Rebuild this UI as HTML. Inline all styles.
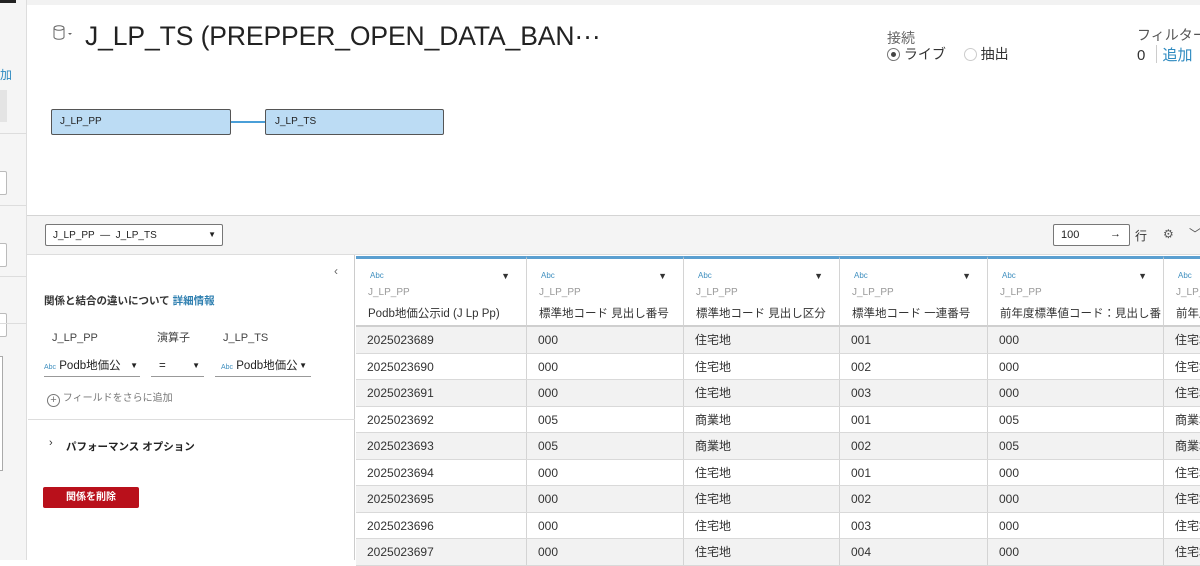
<!DOCTYPE html>
<html><head><meta charset="utf-8"><style>
*{box-sizing:border-box;margin:0;padding:0}
body{width:1200px;height:560px;overflow:hidden;background:#fff;font-family:"Liberation Sans","Noto Sans CJK JP",sans-serif;color:#333;position:relative}
.a{position:absolute}
.hd{border-right:1px solid #d4d4d4;border-bottom:2px solid #cfcfcf;height:71px;top:256px;border-top:3px solid #5b9fd0;background:#fff}
.hd .t{position:absolute;left:14px;top:12px;font-size:8px;color:#3f8fbf}
.hd .s{position:absolute;left:12px;top:28px;font-size:10px;color:#999}
.hd .n{position:absolute;left:12px;top:48px;font-size:11.5px;line-height:14px;color:#333;white-space:nowrap;overflow:hidden;width:calc(100% - 14px)}
.hd .d{position:absolute;right:16px;top:12px;font-size:9px}
.row{position:absolute;left:356px;width:844px;height:26.5px;border-bottom:1px solid #d9d9d9}
.c{position:absolute;top:0;height:100%;border-right:1px solid #d4d4d4;font-size:12px;line-height:14px;padding:6px 0 0 11px;white-space:nowrap;overflow:hidden}
</style></head><body>
<div class="a" style="left:0;top:0;width:27px;height:560px;background:#f5f5f5;border-right:1px solid #ddd"></div>
<div class="a" style="left:0;top:0;width:16px;height:3px;background:#222"></div>
<div class="a" style="left:0;top:66px;font-size:12px;color:#2e8ac0">加</div>
<div class="a" style="left:0;top:90px;width:7px;height:32px;background:#e4e4e4"></div>
<div class="a" style="left:0;top:133px;width:26px;height:1px;background:#ddd"></div>
<div class="a" style="left:-2px;top:171px;width:9px;height:24px;border:1px solid #bbb;background:#fff;border-radius:2px"></div>
<div class="a" style="left:0;top:205px;width:26px;height:1px;background:#ddd"></div>
<div class="a" style="left:-2px;top:243px;width:9px;height:24px;border:1px solid #bbb;background:#fff;border-radius:2px"></div>
<div class="a" style="left:0;top:276px;width:26px;height:1px;background:#ddd"></div>
<div class="a" style="left:-2px;top:313px;width:9px;height:24px;border:1px solid #bbb;background:#fff;border-radius:2px"></div>
<div class="a" style="left:0;top:323px;width:26px;height:1px;background:#ddd"></div>
<div class="a" style="left:-2px;top:356px;width:5px;height:115px;border:1px solid #aaa;background:#fff"></div>
<div class="a" style="left:27px;top:0;width:1173px;height:5px;background:#f2f2f2"></div>
<svg class="a" style="left:52px;top:24px" width="22" height="18" viewBox="0 0 22 18"><ellipse cx="7" cy="4" rx="5" ry="2.3" fill="none" stroke="#666" stroke-width="1"/><path d="M2 4v9c0 1.3 2.2 2.3 5 2.3s5-1 5-2.3V4" fill="none" stroke="#666" stroke-width="1"/><path d="M16 9l2 2 2-2z" fill="#666"/></svg>
<div class="a" style="left:85px;top:21px;font-size:26.5px;color:#222;white-space:nowrap;letter-spacing:-0.1px">J_LP_TS (PREPPER_OPEN_DATA_BAN···</div>
<div class="a" style="left:887px;top:28px;font-size:14px;color:#666">接続</div>
<div class="a" style="left:887px;top:44px;font-size:14px;color:#333;white-space:nowrap"><span style="display:inline-block;width:13px;height:13px;border:1px solid #777;border-radius:50%;vertical-align:-2px;position:relative"><span style="position:absolute;left:3px;top:3px;width:5px;height:5px;border-radius:50%;background:#444"></span></span> ライブ <span style="display:inline-block;width:13px;height:13px;border:1px solid #ccc;border-radius:50%;vertical-align:-2px;margin-left:14px"></span> 抽出</div>
<div class="a" style="left:1137px;top:25px;font-size:14px;color:#555;white-space:nowrap">フィルター</div>
<div class="a" style="left:1137px;top:44px;font-size:15px;color:#333;white-space:nowrap">0 <span style="display:inline-block;width:1px;height:18px;background:#ccc;vertical-align:-3px;margin:0 6px"></span><span style="color:#2e8ac0">追加</span></div>
<div class="a" style="left:51px;top:109px;width:180px;height:26px;background:#bcdcf4;border:1px solid #555;border-radius:2px;font-size:10px;padding:6px 0 0 8px;color:#222">J_LP_PP</div>
<div class="a" style="left:231px;top:121px;width:34px;height:2px;background:#4a9fd8"></div>
<div class="a" style="left:265px;top:109px;width:179px;height:26px;background:#bcdcf4;border:1px solid #555;border-radius:2px;font-size:10px;padding:6px 0 0 9px;color:#222">J_LP_TS</div>
<div class="a" style="left:27px;top:215px;width:1173px;height:40px;background:#f4f4f4;border-top:1px solid #d4d4d4;border-bottom:1px solid #ddd"></div>
<div class="a" style="left:45px;top:224px;width:178px;height:22px;background:#fff;border:1px solid #777;border-radius:2px;font-size:10px;padding:5px 0 0 7px;color:#222">J_LP_PP &nbsp;— &nbsp;J_LP_TS<span style="position:absolute;right:6px;top:5px;font-size:8px">▼</span></div>
<div class="a" style="left:1053px;top:224px;width:77px;height:22px;background:#fff;border:1px solid #777;border-radius:2px;font-size:11px;padding:4px 0 0 7px;color:#222">100<span style="position:absolute;right:8px;top:3px">→</span></div>
<div class="a" style="left:1135px;top:227px;font-size:12px;color:#333">行</div>
<div class="a" style="left:1163px;top:227px;font-size:12px;color:#555">⚙</div>
<div class="a" style="left:1189px;top:225px;font-size:12px;color:#555">﹀</div>
<div class="a" style="left:28px;top:255px;width:327px;height:305px;background:#fff;border-right:1px solid #ccc"></div>
<div class="a" style="left:334px;top:264px;font-size:12px;color:#666">‹</div>
<div class="a" style="left:44px;top:293px;font-size:10.5px;color:#333;font-weight:bold;white-space:nowrap">関係と結合の違いについて <span style="color:#2e7fb0">詳細情報</span></div>
<div class="a" style="left:52px;top:332px;font-size:11px;color:#444">J_LP_PP</div>
<div class="a" style="left:157px;top:332px;font-size:11px;color:#444;line-height:13px">演算子</div>
<div class="a" style="left:223px;top:332px;font-size:11px;color:#444">J_LP_TS</div>
<div class="a" style="left:44px;top:356px;width:96px;height:21px;border-bottom:1px solid #999;font-size:11.5px;line-height:14px;padding-top:3px;white-space:nowrap;overflow:hidden;color:#222"><span style="font-size:7px;color:#3f8fbf">Abc</span> Podb地価公<span style="position:absolute;right:2px;top:3px;font-size:8px">▼</span></div>
<div class="a" style="left:151px;top:356px;width:53px;height:21px;border-bottom:1px solid #999;font-size:11.5px;line-height:14px;padding:3px 0 0 8px;color:#222">=<span style="position:absolute;right:4px;top:3px;font-size:8px">▼</span></div>
<div class="a" style="left:215px;top:356px;width:96px;height:21px;border-bottom:1px solid #999;font-size:11.5px;line-height:14px;padding:3px 0 0 6px;white-space:nowrap;overflow:hidden;color:#222"><span style="font-size:7px;color:#3f8fbf">Abc</span> Podb地価公<span style="position:absolute;right:4px;top:3px;font-size:8px">▼</span></div>
<div class="a" style="left:47px;top:392px;font-size:10px;line-height:14px;color:#777;white-space:nowrap"><span style="display:inline-block;width:13px;height:13px;border:1px solid #777;border-radius:50%;text-align:center;line-height:11px;font-size:11px;vertical-align:-2px">+</span> フィールドをさらに追加</div>
<div class="a" style="left:28px;top:419px;width:327px;height:1px;background:#ddd"></div>
<div class="a" style="left:49px;top:437px;font-size:11px;color:#333">›</div>
<div class="a" style="left:66px;top:439px;font-size:10.5px;color:#222;font-weight:bold">パフォーマンス オプション</div>
<div class="a" style="left:43px;top:487px;width:96px;height:21px;background:#b9101b;border-radius:2px;color:#fff;font-size:10px;font-weight:bold;text-align:center;line-height:21px">関係を削除</div>
<div class="a hd" style="left:356px;width:171px"><span class="t">Abc</span><span class="d">▼</span><span class="s">J_LP_PP</span><span class="n">Podb地価公示id (J Lp Pp)</span></div>
<div class="a hd" style="left:527px;width:157px"><span class="t">Abc</span><span class="d">▼</span><span class="s">J_LP_PP</span><span class="n">標準地コード 見出し番号</span></div>
<div class="a hd" style="left:684px;width:156px"><span class="t">Abc</span><span class="d">▼</span><span class="s">J_LP_PP</span><span class="n">標準地コード 見出し区分</span></div>
<div class="a hd" style="left:840px;width:148px"><span class="t">Abc</span><span class="d">▼</span><span class="s">J_LP_PP</span><span class="n">標準地コード 一連番号</span></div>
<div class="a hd" style="left:988px;width:176px"><span class="t">Abc</span><span class="d">▼</span><span class="s">J_LP_PP</span><span class="n">前年度標準値コード：見出し番号</span></div>
<div class="a hd" style="left:1164px;width:50px"><span class="t">Abc</span><span class="s">J_LP_PP</span><span class="n">前年度</span></div>
<div class="row" style="top:327px;background:#f2f2f2"><div class="c" style="left:0;width:171px">2025023689</div><div class="c" style="left:171px;width:157px">000</div><div class="c" style="left:328px;width:156px">住宅地</div><div class="c" style="left:484px;width:148px">001</div><div class="c" style="left:632px;width:176px">000</div><div class="c" style="left:808px;width:50px">住宅地</div></div>
<div class="row" style="top:353.5px;background:#fff"><div class="c" style="left:0;width:171px">2025023690</div><div class="c" style="left:171px;width:157px">000</div><div class="c" style="left:328px;width:156px">住宅地</div><div class="c" style="left:484px;width:148px">002</div><div class="c" style="left:632px;width:176px">000</div><div class="c" style="left:808px;width:50px">住宅地</div></div>
<div class="row" style="top:380px;background:#f2f2f2"><div class="c" style="left:0;width:171px">2025023691</div><div class="c" style="left:171px;width:157px">000</div><div class="c" style="left:328px;width:156px">住宅地</div><div class="c" style="left:484px;width:148px">003</div><div class="c" style="left:632px;width:176px">000</div><div class="c" style="left:808px;width:50px">住宅地</div></div>
<div class="row" style="top:406.5px;background:#fff"><div class="c" style="left:0;width:171px">2025023692</div><div class="c" style="left:171px;width:157px">005</div><div class="c" style="left:328px;width:156px">商業地</div><div class="c" style="left:484px;width:148px">001</div><div class="c" style="left:632px;width:176px">005</div><div class="c" style="left:808px;width:50px">商業地</div></div>
<div class="row" style="top:433px;background:#f2f2f2"><div class="c" style="left:0;width:171px">2025023693</div><div class="c" style="left:171px;width:157px">005</div><div class="c" style="left:328px;width:156px">商業地</div><div class="c" style="left:484px;width:148px">002</div><div class="c" style="left:632px;width:176px">005</div><div class="c" style="left:808px;width:50px">商業地</div></div>
<div class="row" style="top:459.5px;background:#fff"><div class="c" style="left:0;width:171px">2025023694</div><div class="c" style="left:171px;width:157px">000</div><div class="c" style="left:328px;width:156px">住宅地</div><div class="c" style="left:484px;width:148px">001</div><div class="c" style="left:632px;width:176px">000</div><div class="c" style="left:808px;width:50px">住宅地</div></div>
<div class="row" style="top:486px;background:#f2f2f2"><div class="c" style="left:0;width:171px">2025023695</div><div class="c" style="left:171px;width:157px">000</div><div class="c" style="left:328px;width:156px">住宅地</div><div class="c" style="left:484px;width:148px">002</div><div class="c" style="left:632px;width:176px">000</div><div class="c" style="left:808px;width:50px">住宅地</div></div>
<div class="row" style="top:512.5px;background:#fff"><div class="c" style="left:0;width:171px">2025023696</div><div class="c" style="left:171px;width:157px">000</div><div class="c" style="left:328px;width:156px">住宅地</div><div class="c" style="left:484px;width:148px">003</div><div class="c" style="left:632px;width:176px">000</div><div class="c" style="left:808px;width:50px">住宅地</div></div>
<div class="row" style="top:539px;background:#f2f2f2"><div class="c" style="left:0;width:171px">2025023697</div><div class="c" style="left:171px;width:157px">000</div><div class="c" style="left:328px;width:156px">住宅地</div><div class="c" style="left:484px;width:148px">004</div><div class="c" style="left:632px;width:176px">000</div><div class="c" style="left:808px;width:50px">住宅地</div></div>
</body></html>
